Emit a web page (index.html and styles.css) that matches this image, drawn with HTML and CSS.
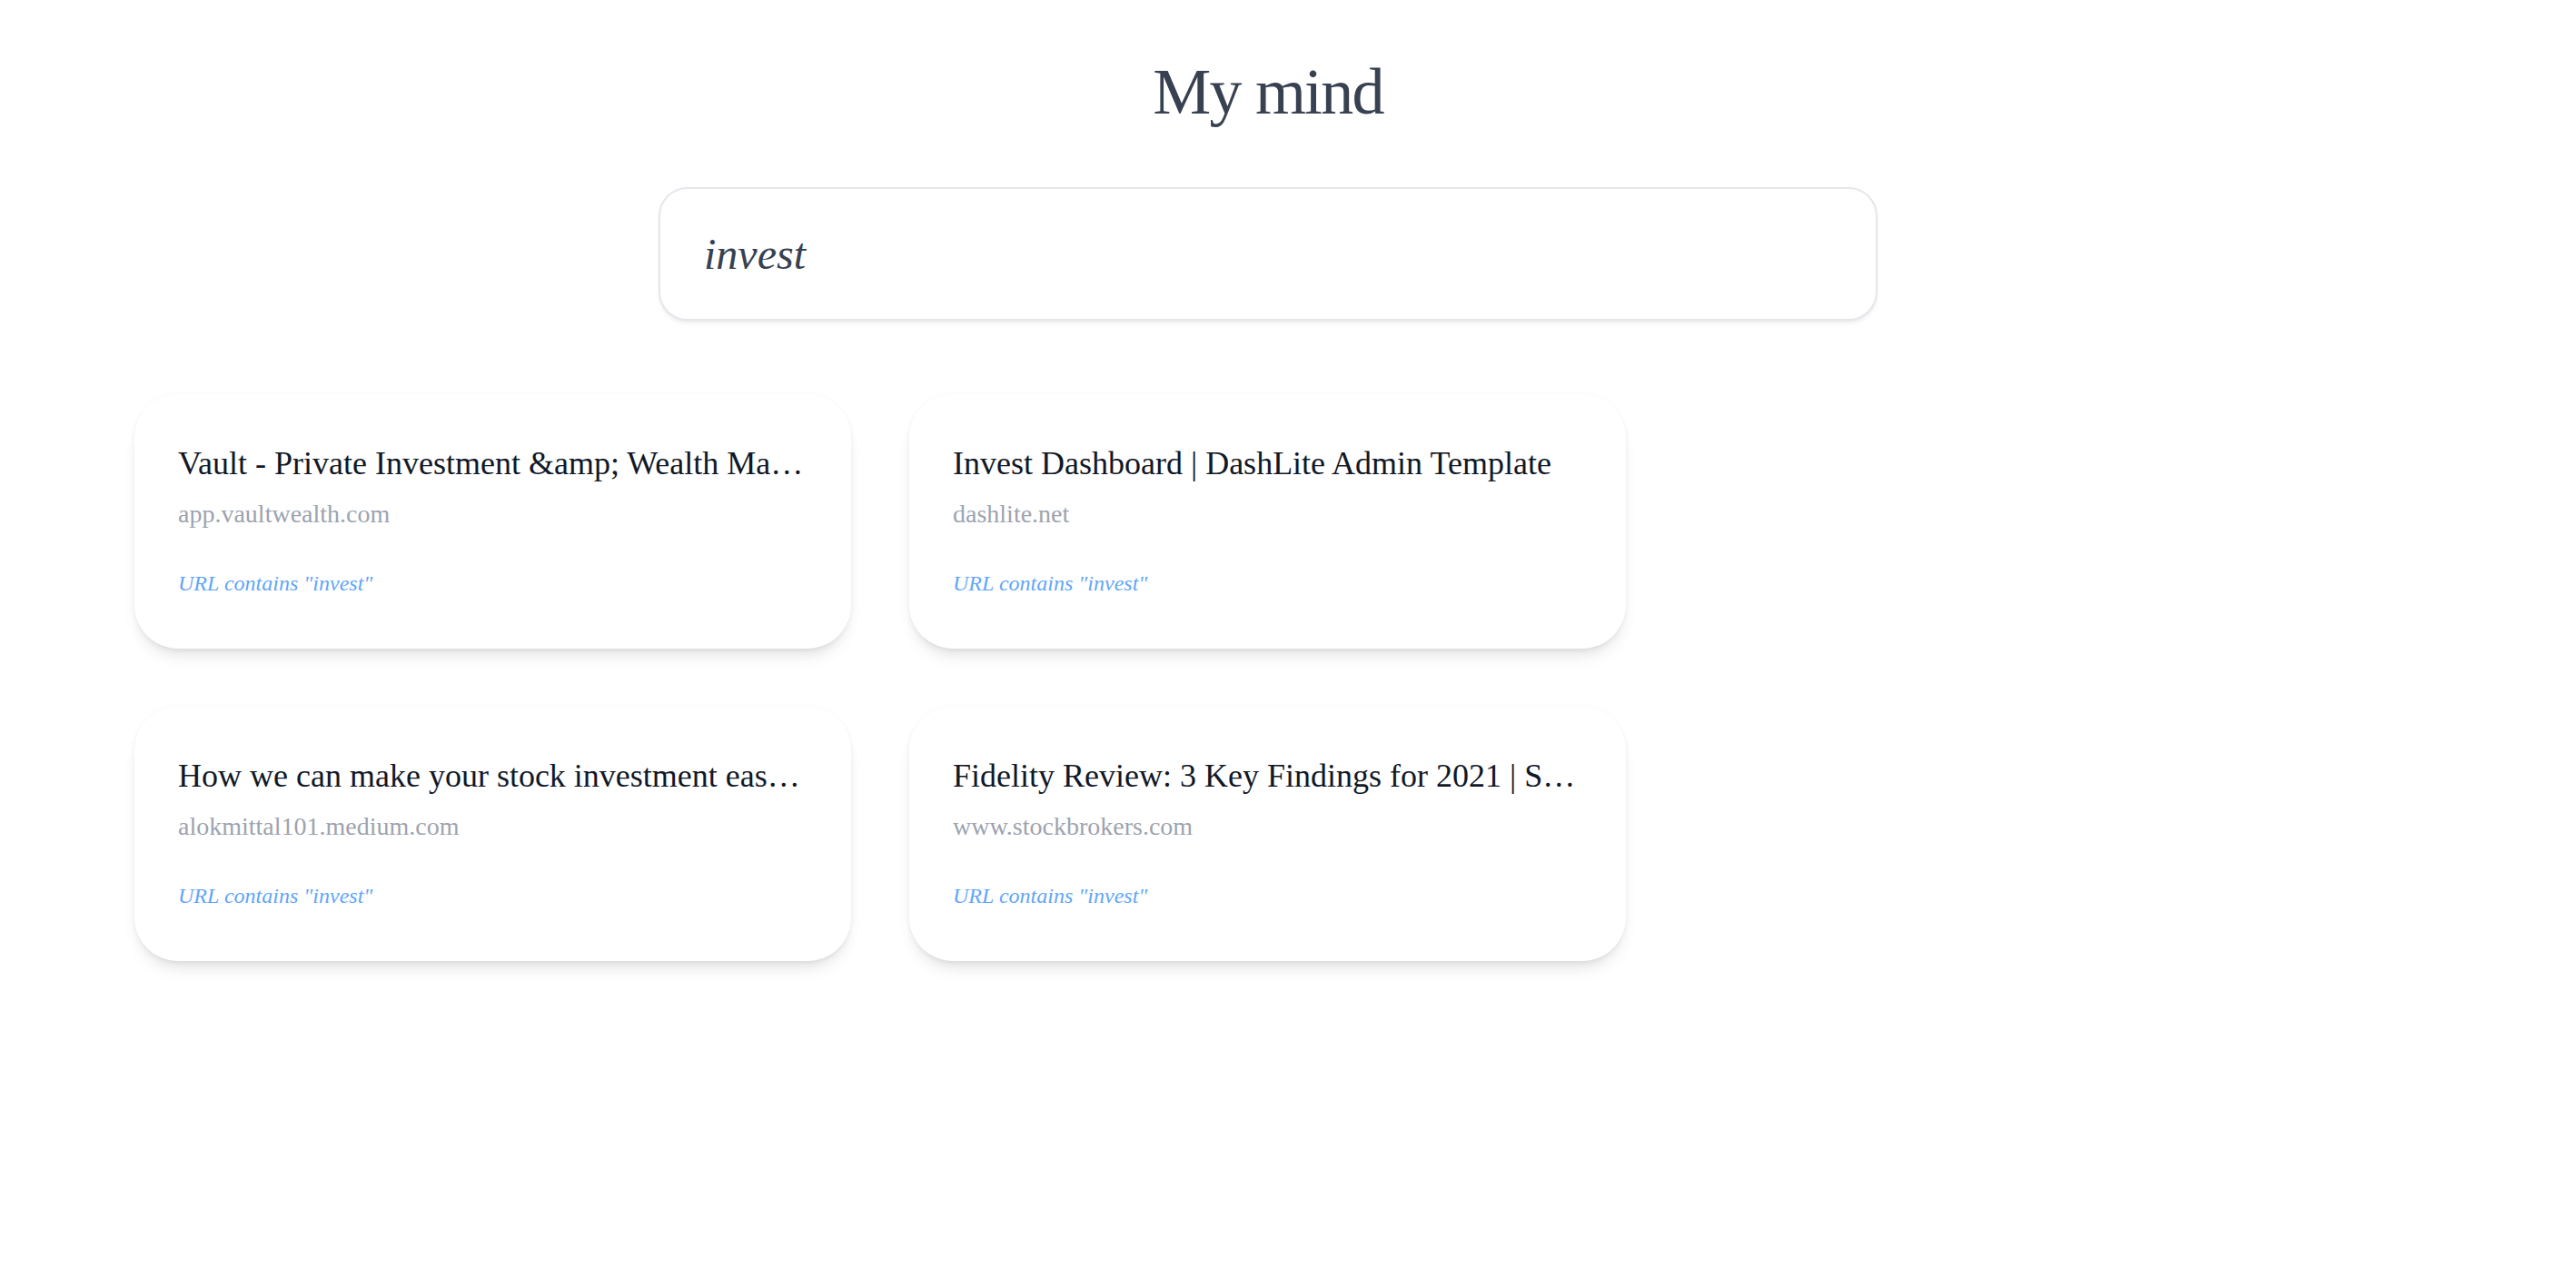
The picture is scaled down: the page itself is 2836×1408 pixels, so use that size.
FILE: index.html
```html
<!DOCTYPE html>
<html lang="en">
<head>
<meta charset="utf-8">
<title>My mind</title>
<link rel="stylesheet" href="styles.css">
</head>
<body>
<div class="page">
  <h1 class="title">My mind</h1>
  <div class="search">
    <input class="search-input" type="text" value="invest" aria-label="Search">
  </div>
  <div class="results">
    <div class="card">
      <div class="card-title">Vault - Private Investment &amp;amp; Wealth Management</div>
      <div class="card-domain">app.vaultwealth.com</div>
      <div class="card-match">URL contains "invest"</div>
    </div>
    <div class="card">
      <div class="card-title">Invest Dashboard | DashLite Admin Template</div>
      <div class="card-domain">dashlite.net</div>
      <div class="card-match">URL contains "invest"</div>
    </div>
    <div class="card">
      <div class="card-title">How we can make your stock investment easier with data</div>
      <div class="card-domain">alokmittal101.medium.com</div>
      <div class="card-match">URL contains "invest"</div>
    </div>
    <div class="card">
      <div class="card-title">Fidelity Review: 3 Key Findings for 2021 | StockBrokers.com</div>
      <div class="card-domain">www.stockbrokers.com</div>
      <div class="card-match">URL contains "invest"</div>
    </div>
  </div>
</div>
</body>
</html>
```

FILE: styles.css
```css
html, body {
  margin: 0;
  padding: 0;
  background: #ffffff;
}

body {
  font-family: "Liberation Serif", "Times New Roman", serif;
}

.page {
  width: 2792px;
  padding-top: 61px;
  padding-bottom: 120px;
  box-sizing: border-box;
}

.title {
  margin: 0;
  text-align: center;
  font-size: 72px;
  line-height: 80px;
  font-weight: 400;
  letter-spacing: -1.8px;
  color: #374151;
}

.search {
  width: 1342px;
  margin: 65px auto 0;
}

.search-input {
  display: block;
  width: 100%;
  height: 147px;
  box-sizing: border-box;
  padding: 0 48px;
  border: 2px solid #e5e7eb;
  border-radius: 32px;
  background: #ffffff;
  box-shadow: 0 4px 6px -2px rgba(0, 0, 0, 0.08), 0 2px 4px -2px rgba(0, 0, 0, 0.06);
  font-family: "Liberation Serif", "Times New Roman", serif;
  font-style: italic;
  font-size: 48px;
  color: #374151;
  outline: none;
}

.results {
  display: grid;
  grid-template-columns: repeat(2, 789px);
  column-gap: 64px;
  row-gap: 64px;
  padding: 0 148px;
  margin-top: 81px;
}

.card {
  min-width: 0;
  background: #ffffff;
  border-radius: 48px;
  padding: 48px 48px 56px;
  box-shadow: 0 12px 18px -6px rgba(0, 0, 0, 0.12), 0 4px 8px -4px rgba(0, 0, 0, 0.08), 0 0 6px rgba(0, 0, 0, 0.03);
}

.card-title {
  font-size: 36px;
  line-height: 56px;
  color: #111827;
  white-space: nowrap;
  overflow: hidden;
  text-overflow: ellipsis;
}

.card-domain {
  margin-top: 8px;
  font-size: 28px;
  line-height: 40px;
  color: #9ca3af;
  white-space: nowrap;
  overflow: hidden;
  text-overflow: ellipsis;
}

.card-match {
  margin-top: 40px;
  font-size: 24px;
  line-height: 32px;
  font-style: italic;
  color: #60a5fa;
}
```
